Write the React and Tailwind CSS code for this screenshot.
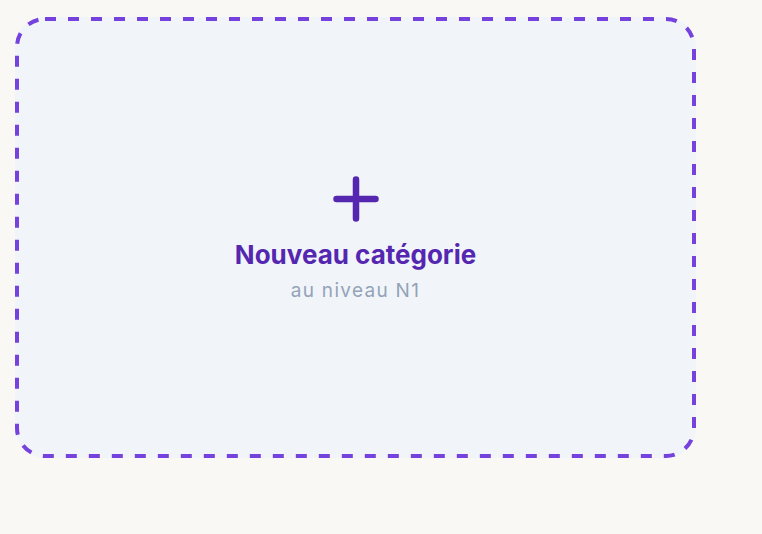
export default function App() {
  return (
    <div className="min-h-screen w-full bg-[#f9f8f5] pt-[17px] pl-[15px]" style={{ fontFamily: "Inter, 'Noto Sans', sans-serif" }}>
      <div className="relative w-[681px] h-[441px] rounded-[30px] bg-[#f1f5f9] flex flex-col items-center justify-center pt-[4px]">
        <svg className="absolute inset-0 pointer-events-none" width="681" height="441" viewBox="0 0 681 441" fill="none">
          <rect x="2" y="2" width="677" height="437" rx="28" stroke="#7642de" strokeWidth="4" strokeDasharray="11 12" />
        </svg>
        <svg width="46" height="46" viewBox="0 0 46 46" fill="none" stroke="#5527b0" strokeWidth="6.5" strokeLinecap="round">
          <path d="M3.5 23h39M23 3.5v39" />
        </svg>
        <div className="mt-[17px] text-[26px] leading-[32px] font-bold text-[#5527b0]">Nouveau catégorie</div>
        <div className="mt-[8px] text-[19px] leading-[24px] tracking-[1.3px] text-[#94a3b8]">au niveau N1</div>
      </div>
    </div>
  );
}
